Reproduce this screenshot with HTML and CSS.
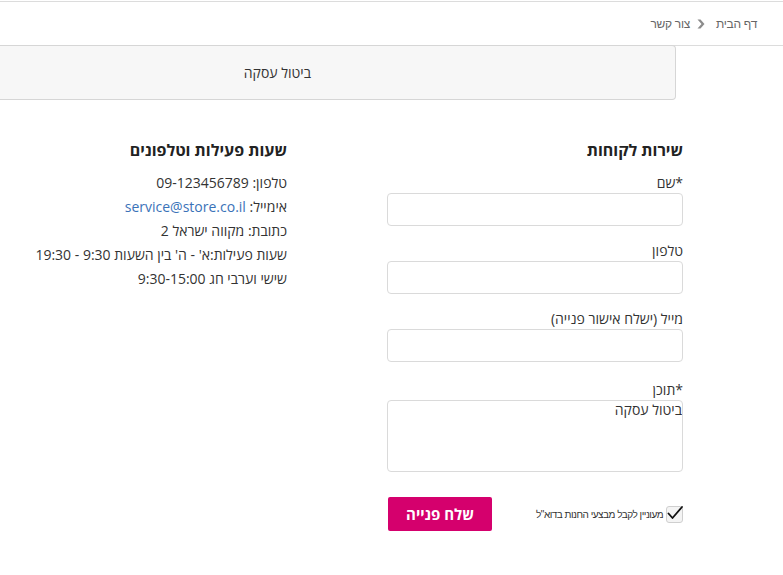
FILE: index.html
```html
<!DOCTYPE html>
<html lang="he" dir="rtl">
<head>
<meta charset="utf-8">
<title>צור קשר</title>
<link rel="stylesheet" href="styles.css">
</head>
<body>
<header class="crumbs">
  <a class="crumb" href="#">דף הבית</a>
  <svg class="sep" width="8" height="10" viewBox="0 0 8 10"><polygon points="0.5,0.5 3.5,0.5 7.5,5 3.5,9.5 0.5,9.5 4.5,5" fill="#8c8c8c"/></svg>
  <span class="crumb current">צור קשר</span>
</header>
<div class="notice"><span>ביטול עסקה</span></div>
<main class="content">
  <section class="form-col">
    <h2 class="title">שירות לקוחות</h2>
    <form class="form">
      <label class="field"><span class="lbl">*שם</span><input class="inp" type="text"></label>
      <label class="field"><span class="lbl">טלפון</span><input class="inp" type="text"></label>
      <label class="field"><span class="lbl">מייל (ישלח אישור פנייה)</span><input class="inp" type="text"></label>
      <label class="field field-area"><span class="lbl">*תוכן</span><textarea class="inp area">ביטול עסקה</textarea></label>
      <div class="actions">
        <label class="check">
          <span class="box"><svg width="20" height="18" viewBox="0 0 20 18"><path d="M3.5 9.5 L7.5 14 L17 3" fill="none" stroke="#111" stroke-width="1.8" stroke-linecap="round" stroke-linejoin="round"/></svg></span>
          <span class="check-text">מעוניין לקבל מבצעי החנות בדוא"ל</span>
        </label>
        <button class="send" type="button">שלח פנייה</button>
      </div>
    </form>
  </section>
  <section class="info-col">
    <h2 class="title">שעות פעילות וטלפונים</h2>
    <p class="line">טלפון: 09-123456789</p>
    <p class="line">אימייל: <a class="mail" href="#">service@store.co.il</a></p>
    <p class="line">כתובת: מקווה ישראל 2</p>
    <p class="line">שעות פעילות:א' - ה' בין השעות 9:30 - 19:30</p>
    <p class="line">שישי וערבי חג 9:30-15:00</p>
  </section>
</main>
</body>
</html>
```
FILE: styles.css
```css
* { box-sizing: border-box; }
html, body {
  margin: 0;
  padding: 0;
  background: #fff;
}
body {
  font-family: "Open Sans", "Noto Sans", "DejaVu Sans", sans-serif;
  color: #333;
  font-size: 14px;
  direction: rtl;
}
.crumbs {
  margin-top: 1px;
  height: 45px;
  border-top: 1px solid #dcdcdc;
  border-bottom: 1px solid #dcdcdc;
  display: flex;
  align-items: center;
  padding-right: 26px;
  font-family: "Liberation Sans", Arial, sans-serif;
  font-size: 12px;
  letter-spacing: -0.3px;
  color: #666;
}
.crumb { color: #666; text-decoration: none; }
.sep { display: block; margin: 0 11px 0 7px; }
.notice {
  margin-top: -1px;
  margin-right: 107px;
  height: 55px;
  background: #f7f7f7;
  border: 1px solid #d6d6d6;
  border-left: none;
  border-radius: 0 4px 4px 0;
  display: flex;
  align-items: center;
  padding-right: 364px;
  font-size: 14px;
  color: #333;
}
.content {
  display: flex;
  gap: 100px;
  padding: 40px 100px 0 0;
}
.form-col { width: 296px; flex: none; }
.info-col { flex: none; }
.title {
  margin: 0 0 13px;
  font-size: 16px;
  line-height: 20px;
  font-weight: 700;
  color: #222;
}
.info-col .title { margin-bottom: 11px; }
.form { display: flex; flex-direction: column; }
.field { display: flex; flex-direction: column; margin-bottom: 15px; }
.lbl { line-height: 20px; font-size: 14px; color: #333; }
.inp {
  width: 296px;
  height: 33px;
  border: 1px solid #dadada;
  border-radius: 4px;
  background: #fff;
  font-family: inherit;
  font-size: 14px;
  color: #333;
  padding: 0 1px;
  margin: 0;
}
.field-area { margin-top: 3px; margin-bottom: 25px; }
.area {
  height: 72px;
  resize: none;
  line-height: 18px;
  padding: 0 0 0 2px;
}
.actions {
  display: flex;
  align-items: center;
  justify-content: space-between;
}
.check { display: flex; align-items: center; gap: 3px; }
.box {
  position: relative;
  width: 17px;
  height: 17px;
  border: 1px solid #cfcfcf;
  border-radius: 3px;
  background: #f4f4f4;
  display: inline-block;
}
.box svg { position: absolute; right: -3px; top: -3px; }
.check-text {
  font-family: "Liberation Sans", Arial, sans-serif;
  font-size: 10px;
  letter-spacing: -0.5px;
  color: #333;
}
.send {
  width: 104px;
  height: 34px;
  background: #d5006d;
  border: none;
  border-radius: 2px;
  color: #fff;
  font-family: inherit;
  font-weight: 700;
  font-size: 15px;
  margin-left: 1px;
}
.line {
  margin: 0;
  line-height: 24px;
  font-size: 14px;
  color: #333;
}
.mail { color: #3a72b8; text-decoration: none; }
```
